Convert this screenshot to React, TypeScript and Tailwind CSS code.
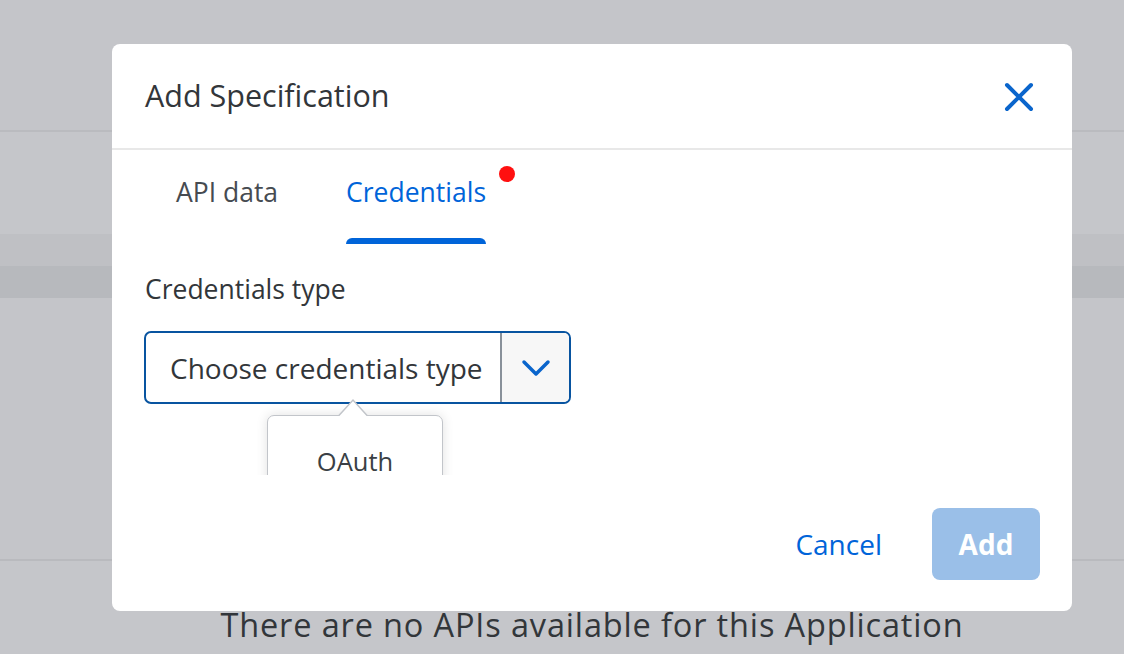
import React from "react";

export default function App() {
  const font = { fontFamily: '"Open Sans", "Noto Sans", sans-serif' };
  return (
    <div className="relative w-[1124px] h-[654px] overflow-hidden bg-[#c5c6ca]" style={font}>
      {/* background page */}
      <div className="flex flex-col h-full">
        <div className="h-[130px] bg-[#c4c5c9]" />
        <div className="h-[2px] bg-[#babbbf]" />
        <div className="h-[102px] bg-[#c5c6ca]" />
        <div className="h-[32px] bg-[#bfc0c4]" />
        <div className="h-[32px] bg-[#b7b9bd]" />
        <div className="h-[261px] bg-[#c4c5c9]" />
        <div className="h-[2px] bg-[#b9babe]" />
        <div className="flex-1 flex items-end justify-center pl-[60px] pb-[9px]">
          <span className="text-[32.5px] tracking-[0.85px] text-[#32363a] leading-[40px]">
            There are no APIs available for this Application
          </span>
        </div>
      </div>

      {/* modal */}
      <div className="absolute left-[112px] top-[44px] w-[960px] h-[567px] bg-white rounded-[8px] flex flex-col">
        <div className="h-[106px] shrink-0 flex items-center justify-between pl-[33px] pr-[38px] border-b-2 border-[#e8e8e8]">
          <span className="text-[30.5px] text-[#32363a]">Add Specification</span>
          <svg width="30" height="30" viewBox="0 0 30 30" className="mt-[2px]">
            <path d="M3 3 L27 27 M27 3 L3 27" stroke="#0a65cc" strokeWidth="4" strokeLinecap="round" />
          </svg>
        </div>

        {/* tabs */}
        <div className="flex pl-[64px] gap-[68px] h-[94px] shrink-0">
          <div className="flex flex-col justify-between">
            <span className="mt-[25px] text-[26.5px] text-[#464b51] leading-[34px]">API data</span>
            <div className="h-[6px]" />
          </div>
          <div className="relative flex flex-col justify-between">
            <span className="mt-[25px] text-[26.5px] text-[#0064d9] leading-[34px]">Credentials</span>
            <div className="h-[6px] bg-[#0064d9] rounded-t-[6px]" />
            <div className="absolute right-[-29px] top-[16px] w-[16px] h-[16px] rounded-full bg-[#ff1010]" />
          </div>
        </div>

        {/* body */}
        <div className="pl-[32px] flex flex-col">
          <span className="mt-[29px] text-[26.5px] text-[#32363a] leading-[32px] pl-[1px]">Credentials type</span>
          <div className="relative mt-[26px] h-[144px] overflow-hidden">
            <div className="w-[427px] h-[73px] border-[2.5px] border-[#0854a0] rounded-[7px] flex overflow-hidden">
              <div className="flex-1 flex items-center pl-[24px] text-[28px] text-[#32363a] whitespace-nowrap">
                Choose credentials type
              </div>
              <div className="w-[2px] bg-[#89919a]" />
              <div className="w-[67px] bg-[#f7f7f7] flex items-center justify-center">
                <svg width="30" height="18" viewBox="0 0 30 18">
                  <path d="M3 3 L15 15 L27 3" fill="none" stroke="#0a65cc" strokeWidth="3.5" strokeLinecap="round" strokeLinejoin="round" />
                </svg>
              </div>
            </div>
            {/* popover */}
            <div className="absolute left-[123px] top-[84px] w-[176px] h-[100px] bg-white border-[1.5px] border-[#c2c5ca] rounded-[7px] shadow-[0_0_12px_rgba(0,0,0,0.12)] flex justify-center">
              <span className="mt-[29px] text-[25.5px] text-[#3a3f45] leading-[32px]">OAuth</span>
            </div>
            <svg className="absolute left-[192px] top-[67px]" width="34" height="19" viewBox="0 0 34 19">
              <path d="M2 18.5 L17 2 L32 18.5" fill="white" stroke="#c2c5ca" strokeWidth="1.5" />
              <rect x="0" y="18" width="34" height="2" fill="white" />
            </svg>
          </div>
        </div>

        {/* footer */}
        <div className="mt-auto mb-[31px] mr-[32px] flex items-center justify-end gap-[50px]">
          <span className="text-[28px] text-[#0064d9]">Cancel</span>
          <div className="w-[108px] h-[72px] rounded-[8px] bg-[#9abfe8] flex items-center justify-center">
            <span className="text-[28px] font-bold text-white">Add</span>
          </div>
        </div>
      </div>
    </div>
  );
}
